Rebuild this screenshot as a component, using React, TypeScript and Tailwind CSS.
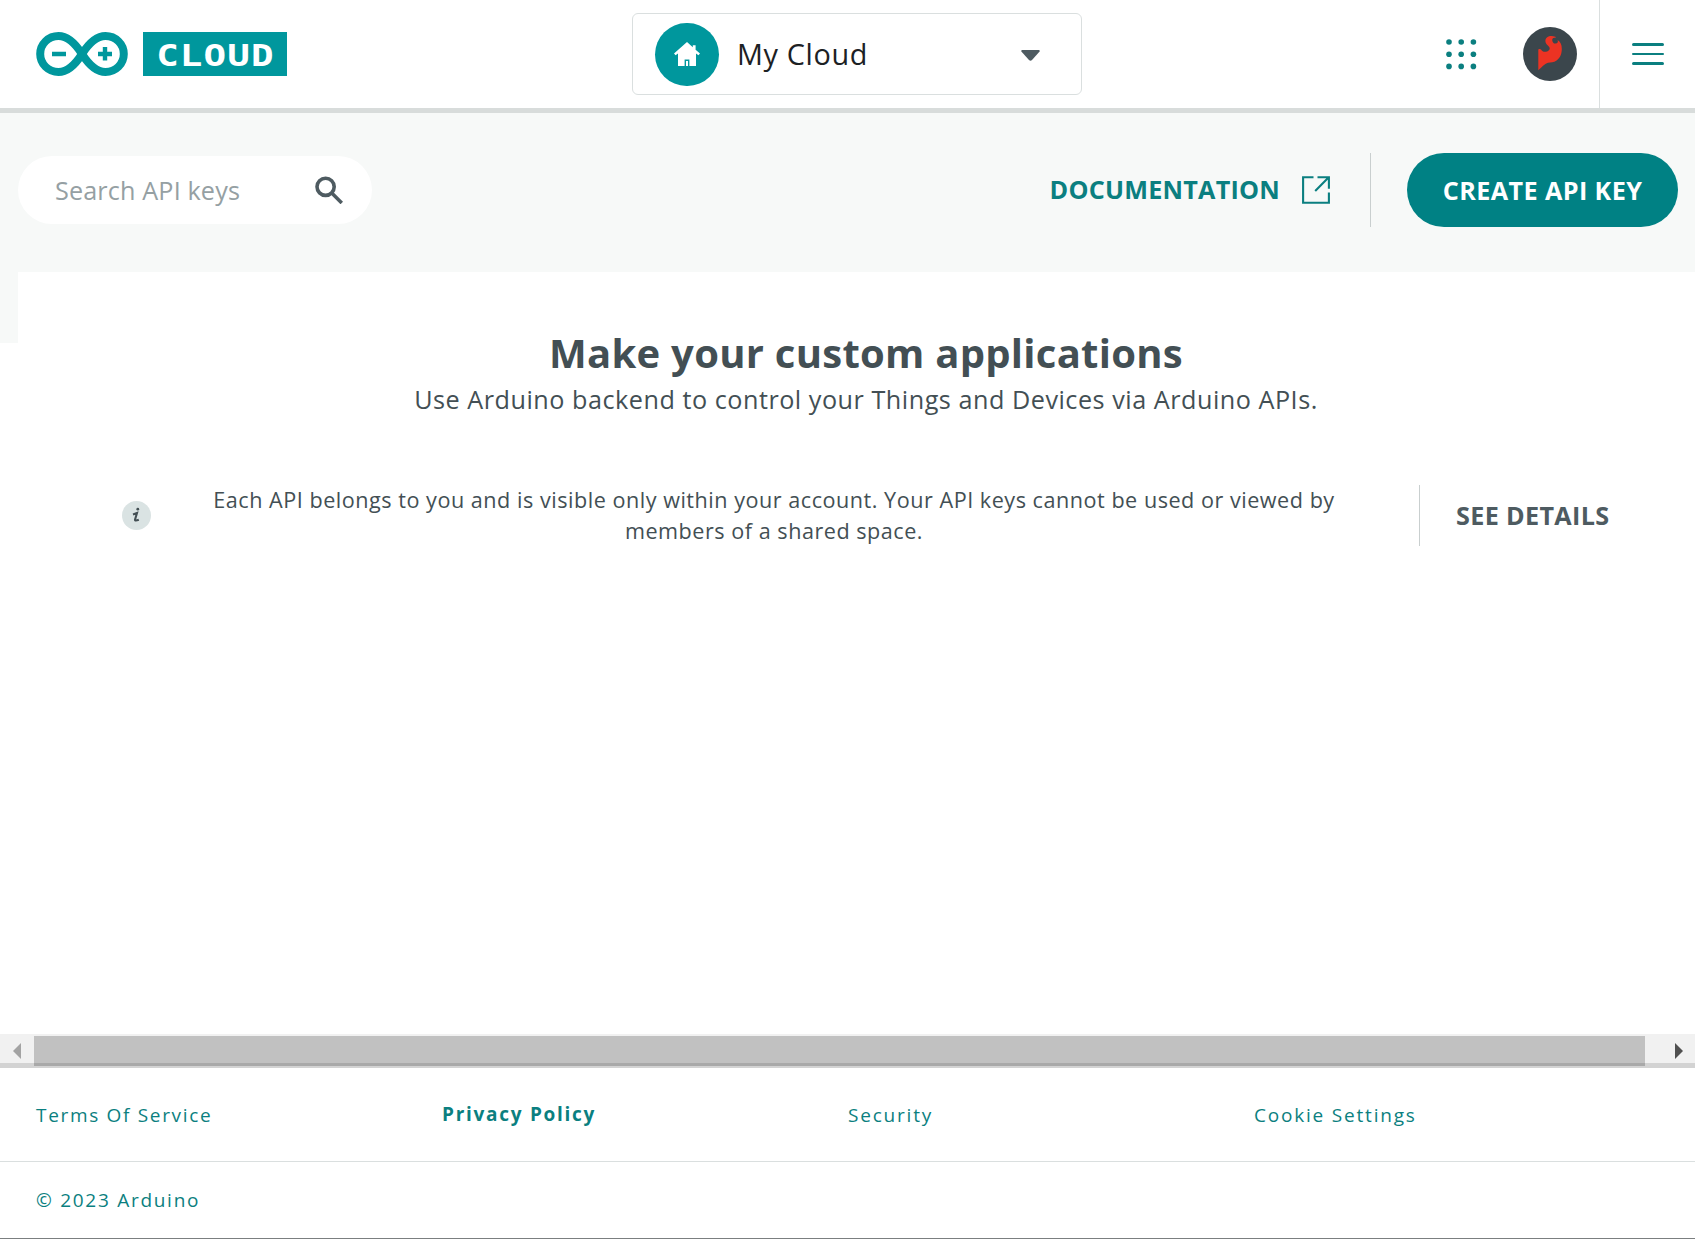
function ArduinoMark() {
  return (
    <svg className="h-11 w-[92px]" viewBox="0 0 92 44" fill="none" stroke="#00979d">
      <path
        d="M46 22 C39 11 32 4 22.5 4 A18.3 18 0 0 0 22.5 40 C32 40 39 33 46 22 C53 11 60 4 69.5 4 A18.3 18 0 0 1 69.5 40 C60 40 53 33 46 22 Z"
        strokeWidth="8"
      />
      <path d="M16 22h14M62 22h14M69 15v13.5" strokeWidth="4.4" />
    </svg>
  );
}

function HomeIcon() {
  return (
    <svg className="h-[26px] w-[26px]" viewBox="0 0 26 26" fill="#fff">
      <path d="M13 1 0 12.6 1.6 14.2 4 12.4V25h5.6v-7h6.2v7H22V12.4l2.4 1.8 1.6-1.6-4.4-3.9V4.2h-2.8v2Z" />
      <path d="M4 14h18v11H4z" />
      <path d="M10.6 18.5h4.8V25h-4.8z" fill="#00979d" />
      <path d="M12 20h2v5h-2z" />
    </svg>
  );
}

function Avatar() {
  return (
    <svg className="h-[54px] w-[54px]" viewBox="0 0 54 54">
      <circle cx="27" cy="27" r="27" fill="#3b464c" />
      <path
        fill="#ec3323"
        d="M15.3 43.2V22.4C16.5 21.6 17.8 21.8 18.2 22.8C18.8 24.2 20.6 25 22.6 24.8C25 24.5 27 23.2 26.7 21C26.3 18.6 22.4 17.8 22.4 14C22.4 10.4 25.6 8.8 28.7 9C30.6 9.1 32.2 9.5 33.2 10.4C31.2 10.3 29.2 10.9 29.2 12.9C29.2 14.8 30.6 16.8 32.6 16.6C34.6 16.4 35.4 15 34.6 13.1C37.4 14.6 38.8 17.8 38.8 21.8C38.8 26.4 37.6 30.6 33.6 33.6C30.6 35.8 27.8 35.2 25 35.8C21.8 36.6 20 39.4 15.3 43.2Z"
      />
    </svg>
  );
}

function ExternalIcon() {
  return (
    <svg className="h-7 w-7" viewBox="0 0 28 28" fill="none" stroke="#0b7f80" strokeWidth="2.1">
      <path d="M11.5 1.3H1.1v25.4h25.8V16.5M15.5 1.3h11.4v11.5M26.5 1.6 13.2 15" />
    </svg>
  );
}

function SearchIcon() {
  return (
    <svg className="h-7 w-7" viewBox="0 0 28 28" fill="none" stroke="#4e5b61">
      <circle cx="10.6" cy="10.8" r="8.6" strokeWidth="3.6" />
      <path d="m17 17.2 9.8 9.8" strokeWidth="3.6" />
    </svg>
  );
}

function AppsIcon() {
  const steps = [3, 15.2, 27.4];
  return (
    <svg className="h-[31px] w-[31px]" viewBox="0 0 31 31" fill="#0b7f80">
      {steps.map((y) => steps.map((x) => <circle key={`${x}-${y}`} cx={x} cy={y} r="2.8" />))}
    </svg>
  );
}

function Header() {
  return (
    <header className="flex h-[113px] shrink-0 items-stretch justify-between border-b-[5px] border-[#d8dcdb] bg-white">
      <div className="flex w-[632px] items-center gap-[15px] pl-9">
        <ArduinoMark />
        <div className="flex h-11 w-36 items-center justify-center bg-[#00979d]">
          <span className="mt-[3px] ml-px inline-block scale-x-125 font-['DejaVu_Sans_Mono',monospace] text-[30px] leading-none font-bold tracking-[0.9px] text-white">
            CLOUD
          </span>
        </div>
      </div>
      <button className="mt-[13px] flex h-[82px] w-[450px] items-center rounded-md border border-[#dadfdf] pr-[41px] pl-[22px]">
        <span className="flex h-[63px] w-16 items-center justify-center rounded-full bg-[#00979d]">
          <HomeIcon />
        </span>
        <span className="ml-[18px] text-[28.8px] tracking-[0.65px] text-[#1c2124]">My Cloud</span>
        <svg className="mt-[2px] ml-auto h-[11px] w-[19px]" viewBox="0 0 19 11" fill="#4e5b61">
          <path d="M1 0h17q1.4.6.4 1.8L11 10q-1.5 1.4-3 0L.6 1.8Q-.4.6 1 0Z" />
        </svg>
      </button>
      <div className="flex w-[613px] items-center justify-end">
        <AppsIcon />
        <div className="ml-[46px]">
          <Avatar />
        </div>
        <div className="ml-[22px] flex h-full w-24 flex-col items-center justify-center gap-[7px] border-l border-[#dadfdf]">
          <span className="h-[2.5px] w-8 rounded-full bg-[#0b7f80]" />
          <span className="h-[2.5px] w-8 rounded-full bg-[#0b7f80]" />
          <span className="h-[2.5px] w-8 rounded-full bg-[#0b7f80]" />
        </div>
      </div>
    </header>
  );
}

function Toolbar() {
  return (
    <div className="flex h-[159px] shrink-0 items-start justify-between bg-[#f7f9f8] pt-10 pr-[17px] pl-[18px]">
      <div className="mt-[3px] flex h-[68px] w-[354px] items-center justify-between rounded-full bg-white pr-[29px] pl-[37px]">
        <span className="pt-[2px] text-[25.2px] tracking-[0.14px] text-[#95a0a3]">Search API keys</span>
        <SearchIcon />
      </div>
      <div className="flex h-[74px] items-center">
        <a className="text-[25.2px] font-bold tracking-[0.22px] text-[#0b7f80]">DOCUMENTATION</a>
        <div className="mr-10 ml-[22px]">
          <ExternalIcon />
        </div>
        <div className="h-full w-px bg-[#c9cfcf]" />
        <button className="ml-9 h-full w-[271px] rounded-full bg-[#008184] pt-[2px] text-[25.2px] font-bold tracking-[0.4px] text-white">
          CREATE API KEY
        </button>
      </div>
    </div>
  );
}

function Content() {
  return (
    <main className="flex h-[762px] shrink-0 overflow-hidden">
      <div className="h-[71px] w-[18px] shrink-0 bg-[#f7f9f8]" />
      <section className="flex w-[1696px] shrink-0 flex-col pt-[53px] text-center text-[#434f54]">
        <h1 className="text-[40px] leading-[56px] font-bold tracking-[0.27px]">Make your custom applications</h1>
        <p className="text-[25.2px] leading-9 tracking-[0.52px]">
          Use Arduino backend to control your Things and Devices via Arduino APIs.
        </p>
        <div className="mt-[68px] flex h-[61px] items-center pl-[104px]">
          <span className="flex size-[29px] items-center justify-center rounded-full bg-[#dae3e3]">
            <svg className="mb-px h-4 w-3" viewBox="0 0 12 16" fill="none" stroke="#434f54" strokeWidth="2.1">
              <path d="M2 7.4 6 6 4 12.6Q3.8 14.4 7.8 12.8" />
              <circle cx="6.8" cy="2.2" r="1.4" fill="#434f54" stroke="none" />
            </svg>
          </span>
          <p className="mb-[2px] ml-[61px] w-[1124px] text-[21.6px] leading-[31px] tracking-[0.52px]">
            Each API belongs to you and is visible only within your account. Your API keys cannot be used or viewed by
            <br />
            members of a shared space.
          </p>
          <div className="ml-[83px] h-full w-px bg-[#c9cfcf]" />
          <button className="ml-9 text-[25.2px] font-bold tracking-[0.34px] text-[#4e5b61]">SEE DETAILS</button>
        </div>
      </section>
    </main>
  );
}

function ScrollBar() {
  return (
    <div className="relative flex h-[34px] shrink-0 items-center justify-between bg-[#f1f1f1]">
      <svg className="ml-[13px] h-4 w-2" viewBox="0 0 8 16" fill="#a3a3a3">
        <path d="M8 0v16L0 8Z" />
      </svg>
      <div className="ml-[13px] h-[30px] flex-1 bg-[#c1c1c1]" />
      <svg className="mr-3 ml-[30px] h-4 w-2" viewBox="0 0 8 16" fill="#505050">
        <path d="M0 0v16l8-8Z" />
      </svg>
      <div className="absolute inset-x-0 bottom-0 h-[5px] bg-black/12" />
    </div>
  );
}

function Footer() {
  return (
    <footer className="flex flex-1 flex-col border-b border-[#7b7f80] text-[19px] leading-7 tracking-[1.8px] text-[#0b7f80]">
      <nav className="grid h-[94px] grid-cols-4 items-center border-b border-[#dadfdf] pr-[35px] pl-9">
        <a className="tracking-[1.68px]">Terms Of Service</a>
        <a className="-mt-[2px] font-bold tracking-[1.72px]">Privacy Policy</a>
        <a>Security</a>
        <a>Cookie Settings</a>
      </nav>
      <p className="pt-6 pl-9 tracking-[1.72px]">© 2023 Arduino</p>
    </footer>
  );
}

export default function App() {
  return (
    <div className="flex h-[1239px] w-full flex-col overflow-hidden bg-white font-['Open_Sans',sans-serif]">
      <Header />
      <Toolbar />
      <Content />
      <ScrollBar />
      <Footer />
    </div>
  );
}
